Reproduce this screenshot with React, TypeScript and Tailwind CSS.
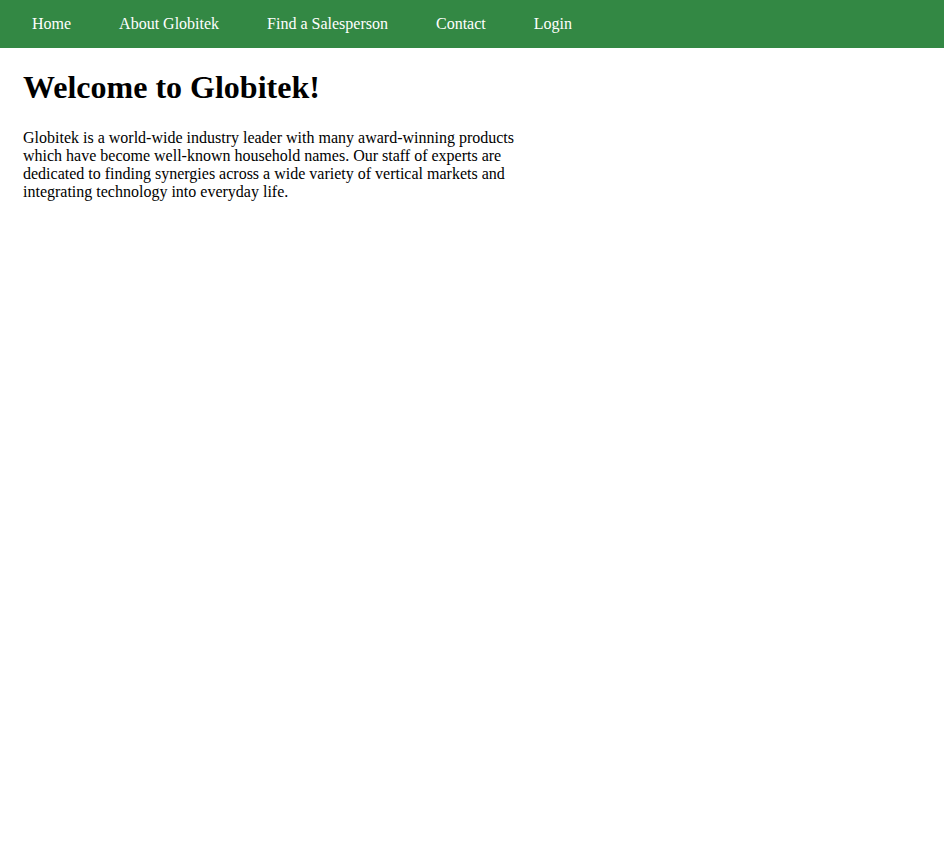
const navItems = ["Home", "About Globitek", "Find a Salesperson", "Contact", "Login"];

export default function App() {
  return (
    <div className="min-h-screen bg-white text-black font-['Liberation_Serif','Times_New_Roman',serif]">
      <nav className="bg-[#338844] h-12 pl-2">
        <ul className="flex h-full items-center">
          {navItems.map((item) => (
            <li key={item}>
              <a href="#" className="px-6 text-base leading-[18px] text-white">
                {item}
              </a>
            </li>
          ))}
        </ul>
      </nav>
      <main className="px-[23px]">
        <h1 className="pt-[21px] text-[32px] font-bold leading-[37px]">Welcome to Globitek!</h1>
        <p className="mt-[23px] w-[500px] text-base leading-[18px]">
          Globitek is a world-wide industry leader with many award-winning products which have become
          well-known household names. Our staff of experts are dedicated to finding synergies across a
          wide variety of vertical markets and integrating technology into everyday life.
        </p>
      </main>
    </div>
  );
}
